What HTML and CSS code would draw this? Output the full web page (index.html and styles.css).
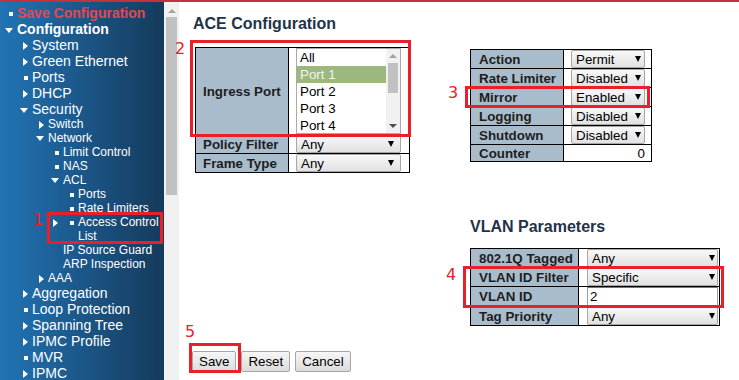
FILE: index.html
```html
<!DOCTYPE html>
<html lang="en">
<head>
    <meta charset="UTF-8">
    <meta name="viewport" content="width=device-width, initial-scale=1.0">
    <title>ACE Configuration</title>
    <link rel="stylesheet" href="styles.css">
</head>
<body>
    <div class="topline"></div>
    <div class="page">
        <nav class="menu">
            <ul>
                <li class="leaf save"><div class="row">Save Configuration</div></li>
                <li class="open head"><div class="row">Configuration</div>
                    <ul>
                        <li class="closed"><div class="row">System</div></li>
                        <li class="closed"><div class="row">Green Ethernet</div></li>
                        <li class="leaf"><div class="row">Ports</div></li>
                        <li class="closed"><div class="row">DHCP</div></li>
                        <li class="open"><div class="row">Security</div>
                            <ul class="small">
                                <li class="closed"><div class="row">Switch</div></li>
                                <li class="open"><div class="row">Network</div>
                                    <ul>
                                        <li class="leaf"><div class="row">Limit Control</div></li>
                                        <li class="leaf"><div class="row">NAS</div></li>
                                        <li class="open"><div class="row">ACL</div>
                                            <ul>
                                                <li class="leaf"><div class="row">Ports</div></li>
                                                <li class="leaf"><div class="row">Rate Limiters</div></li>
                                                <li class="leaf current"><span class="mark"></span><div class="row">Access Control List</div></li>
                                            </ul>
                                        </li>
                                        <li class="plain"><div class="row">IP Source Guard</div></li>
                                        <li class="plain"><div class="row">ARP Inspection</div></li>
                                    </ul>
                                </li>
                                <li class="closed"><div class="row">AAA</div></li>
                            </ul>
                        </li>
                        <li class="closed"><div class="row">Aggregation</div></li>
                        <li class="leaf"><div class="row">Loop Protection</div></li>
                        <li class="closed"><div class="row">Spanning Tree</div></li>
                        <li class="closed"><div class="row">IPMC Profile</div></li>
                        <li class="leaf"><div class="row">MVR</div></li>
                        <li class="closed"><div class="row">IPMC</div></li>
                    </ul>
                </li>
            </ul>
        </nav>
        <div class="vscroll"><span class="up"></span><span class="thumb"></span></div>

        <main class="main">
            <h1>ACE Configuration</h1>
            <div class="cols">
                <table class="config ace">
                    <tr>
                        <td class="label">Ingress Port</td>
                        <td>
                            <div class="listbox">
                                <div class="opts">
                                    <div class="opt">All</div>
                                    <div class="opt sel">Port 1</div>
                                    <div class="opt">Port 2</div>
                                    <div class="opt">Port 3</div>
                                    <div class="opt">Port 4</div>
                                </div>
                                <div class="lsb"><span class="up"></span><span class="thumb"></span><span class="down"></span></div>
                            </div>
                        </td>
                    </tr>
                    <tr>
                        <td class="label">Policy Filter</td>
                        <td><div class="select">Any</div></td>
                    </tr>
                    <tr>
                        <td class="label">Frame Type</td>
                        <td><div class="select">Any</div></td>
                    </tr>
                </table>

                <div class="side">
                    <table class="config action">
                        <tr><td class="label">Action</td><td><div class="select">Permit</div></td></tr>
                        <tr><td class="label">Rate Limiter</td><td><div class="select">Disabled</div></td></tr>
                        <tr><td class="label">Mirror</td><td><div class="select">Enabled</div></td></tr>
                        <tr><td class="label">Logging</td><td><div class="select">Disabled</div></td></tr>
                        <tr><td class="label">Shutdown</td><td><div class="select">Disabled</div></td></tr>
                        <tr class="counter"><td class="label">Counter</td><td class="num-cell">0</td></tr>
                    </table>

                    <h2>VLAN Parameters</h2>
                    <table class="config vlan">
                        <tr><td class="label">802.1Q Tagged</td><td><div class="select">Any</div></td></tr>
                        <tr><td class="label">VLAN ID Filter</td><td><div class="select">Specific</div></td></tr>
                        <tr><td class="label">VLAN ID</td><td><input class="field" type="text" value="2"></td></tr>
                        <tr><td class="label">Tag Priority</td><td><div class="select">Any</div></td></tr>
                    </table>
                </div>
            </div>

            <div class="buttons">
                <button>Save</button>
                <button>Reset</button>
                <button>Cancel</button>
            </div>
        </main>
    </div>

    <!-- step markers drawn over the screenshot -->
    <div class="box b1"></div>
    <div class="box b2"></div>
    <div class="box b3"></div>
    <div class="box b4"></div>
    <div class="box b5"></div>
    <span class="step s1">1</span>
    <span class="step s2">2</span>
    <span class="step s3">3</span>
    <span class="step s4">4</span>
    <span class="step s5">5</span>
</body>
</html>
```
FILE: styles.css
```css
body {
    margin: 0;
    position: relative;
    width: 739px;
    height: 380px;
    overflow: hidden;
    font-family: "Liberation Sans", Arial, sans-serif;
    background-color: #fff;
}

.topline {
    height: 2px;
    background-color: #c2343c;
}

.page {
    display: flex;
    height: 378px;
}

/* left menu */
.menu {
    width: 164px;
    flex: none;
    box-sizing: border-box;
    padding-top: 3px;
    overflow: hidden;
    color: #fff;
    background: linear-gradient(to right, #2174b6, #153a5b);
}

.menu ul {
    list-style: none;
    margin: 0;
    padding: 0 0 0 15px;
}

.menu > ul {
    padding-left: 17px;
}

.menu ul.small {
    padding-left: 16px;
}

.menu li {
    font-size: 14px;
    line-height: 16px;
}

.menu .small li {
    font-size: 12px;
    line-height: 14px;
}

.menu .save > .row {
    color: #e4474f;
    font-weight: bold;
}

.menu .head > .row {
    font-weight: bold;
}

.row::before {
    content: "";
    display: inline-block;
    vertical-align: middle;
    margin-right: 4px;
}

.leaf > .row {
    text-indent: -8px;
}

.leaf > .row::before {
    width: 4px;
    height: 4px;
    background-color: #fff;
}

.closed > .row {
    text-indent: -9px;
}

.closed > .row::before {
    border-left: 5px solid #fff;
    border-top: 4.5px solid transparent;
    border-bottom: 4.5px solid transparent;
}

.open > .row {
    text-indent: -12px;
}

.open > .row::before {
    border-top: 5px solid #fff;
    border-left: 4px solid transparent;
    border-right: 4px solid transparent;
}

.plain > .row::before {
    display: none;
}

.current {
    position: relative;
}

.current .mark {
    position: absolute;
    left: -25px;
    top: 4px;
    border-left: 5px solid #fff;
    border-top: 4px solid transparent;
    border-bottom: 4px solid transparent;
}

/* page scrollbar */
.vscroll {
    width: 15px;
    flex: none;
    display: flex;
    flex-direction: column;
    align-items: center;
    background-color: #f1f1f1;
}

.vscroll .up {
    margin-top: 7px;
    border-bottom: 4px solid #a3a3a3;
    border-left: 4px solid transparent;
    border-right: 4px solid transparent;
}

.vscroll .thumb {
    margin-top: 4px;
    width: 11px;
    height: 178px;
    background-color: #c1c1c1;
}

/* content */
.main {
    flex: 1;
    padding: 12px 0 0 14px;
}

h1, h2 {
    margin: 0;
    font-size: 16px;
    line-height: 19px;
    color: #1f3349;
}

h2 {
    margin: 55px 0 12px;
}

.cols {
    display: flex;
    align-items: flex-start;
    margin-top: 14px;
}

.side {
    margin: 2px 0 0 60px;
}

.config {
    border-collapse: collapse;
}

.config.ace {
    margin-left: 2px;
}

.config td {
    height: 18px;
    padding: 0 7px;
    border: 1px solid #000;
    font-size: 13.333px;
}

.config td.label {
    padding: 0 4px 0 8px;
    background-color: #a9bccb;
    color: #1e1e1e;
    font-size: 13.333px;
    font-weight: bold;
}

.ace td.label {
    width: 81px;
    padding-left: 7px;
}

.action td.label {
    width: 80px;
}

.vlan td.label {
    width: 95px;
}

.ace td {
    padding-right: 8px;
}

.action td {
    padding-right: 6px;
}

.vlan td {
    padding: 0 1px 0 8px;
}

.counter td {
    height: 16px;
}

.config td.num-cell {
    text-align: right;
}

.select {
    display: flex;
    align-items: center;
    justify-content: space-between;
    box-sizing: border-box;
    height: 18px;
    padding: 0 6px 0 4px;
    border: 1px solid #a6a6a6;
    border-radius: 2px;
    background: linear-gradient(#f8f8f8, #e1e1e1);
    color: #000;
    font-size: 13.333px;
}

.select::after {
    content: "";
    border-top: 6px solid #000;
    border-left: 3px solid transparent;
    border-right: 3px solid transparent;
}

.ace .select {
    width: 105px;
}

.action .select {
    width: 74px;
    padding-right: 3px;
}

.vlan .select {
    width: 131px;
    padding-right: 2px;
}

.field {
    display: block;
    box-sizing: border-box;
    width: 131px;
    height: 19px;
    margin: 0;
    padding: 0 2px;
    border: 1px solid #a0a0a0;
    border-top-color: #767676;
    font: 13.333px "Liberation Sans", Arial, sans-serif;
    color: #000;
}

.listbox {
    display: flex;
    box-sizing: border-box;
    width: 105px;
    height: 86px;
    border: 1px solid #a9a9a9;
    background-color: #fff;
}

.listbox .opts {
    flex: 1;
}

.opt {
    height: 17px;
    line-height: 17px;
    padding-left: 3px;
    font-size: 13.333px;
}

.opt.sel {
    background-color: #9db87d;
    color: #eff4ea;
}

.lsb {
    width: 14px;
    display: flex;
    flex-direction: column;
    align-items: center;
    background-color: #f1f1f1;
}

.lsb .up {
    margin-top: 5px;
    border-bottom: 4px solid #a3a3a3;
    border-left: 4px solid transparent;
    border-right: 4px solid transparent;
}

.lsb .thumb {
    margin-top: 5px;
    width: 10px;
    height: 30px;
    background-color: #c1c1c1;
}

.lsb .down {
    margin: auto 0 5px;
    border-top: 4px solid #505050;
    border-left: 4px solid transparent;
    border-right: 4px solid transparent;
}

.buttons {
    display: flex;
    gap: 5px;
    margin: 25px 0 0 -1px;
}

button {
    height: 21px;
    padding: 0 6px;
    border: 1px solid #a6a6a6;
    border-radius: 2px;
    background: linear-gradient(#f6f6f6, #dcdcdc);
    color: #000;
    font: 13.333px "Liberation Sans", Arial, sans-serif;
}

/* red step annotations */
.box {
    position: absolute;
    box-sizing: border-box;
    border: 3px solid #e8202a;
}

.b1 { left: 47px; top: 212px; width: 116px; height: 32px; }
.b2 { left: 190px; top: 40px; width: 221px; height: 97px; }
.b3 { left: 465px; top: 86px; width: 185px; height: 22px; }
.b4 { left: 463px; top: 266px; width: 261px; height: 42px; }
.b5 { left: 189px; top: 343px; width: 52px; height: 30px; }

.step {
    position: absolute;
    color: #e8202a;
    font: 16px/16px "DejaVu Sans", sans-serif;
}

.s1 { left: 33px; top: 212px; }
.s2 { left: 175px; top: 41px; }
.s3 { left: 448px; top: 85px; }
.s4 { left: 446px; top: 267px; }
.s5 { left: 185px; top: 324px; }
```
